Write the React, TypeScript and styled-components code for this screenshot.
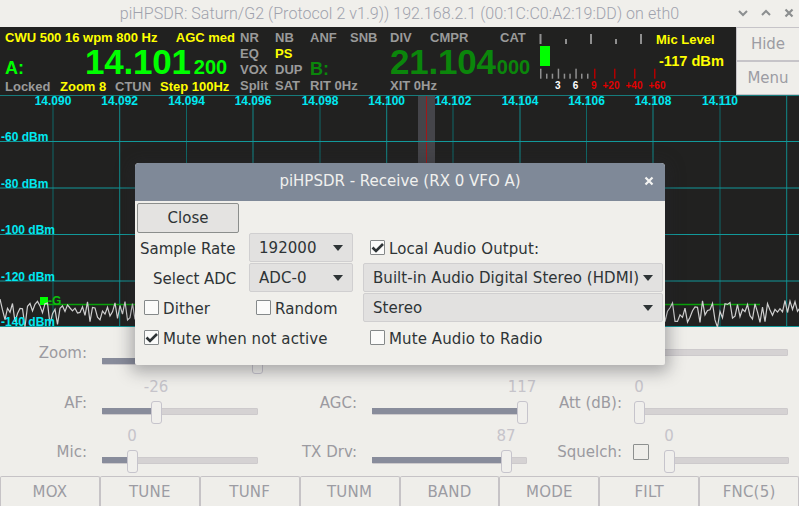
import React from "react";
import styled, { createGlobalStyle } from "styled-components";

const Global = createGlobalStyle`
  html, body { margin: 0; padding: 0; width: 799px; height: 506px; overflow: hidden; background: #efeeea; }
  #root { width: 799px; height: 506px; }
`;

const Page = styled.div`
  position: relative;
  width: 799px;
  height: 506px;
  overflow: hidden;
  display: flex;
  flex-direction: column;
  background: #efeeea;
  font-family: "DejaVu Sans", sans-serif;
`;

const TitleBar = styled.div`
  height: 27px;
  flex: none;
  display: flex;
  align-items: center;
  background: #f0efeb;
  position: relative;
`;
const TitleText = styled.div`
  width: 799px;
  text-align: center;
  font: 300 16px/25px Roboto, sans-serif;
  letter-spacing: 0.05px;
  color: #9fa2ad;
  white-space: nowrap;
`;
const WindowControls = styled.div`
  position: absolute;
  right: 4px;
  top: 7px;
  display: flex;
  gap: 11px;
`;

const VfoRow = styled.div`
  height: 68px;
  flex: none;
  display: flex;
  background: #212120;
`;
const Readout = styled.div`
  width: 736px;
  display: flex;
  font-family: "Liberation Sans", Arial, sans-serif;
  font-weight: 700;
  font-size: 13px;
  line-height: 15px;
  color: #9a9a9a;
  white-space: nowrap;
`;
const MainVfo = styled.div`
  width: 230px;
  flex: none;
  padding: 3px 0 0 5px;
`;
const Spread = styled.div`
  display: flex;
  justify-content: space-between;
  height: 15px;
`;
const Yellow = styled.span`
  color: #ffff00;
`;
const FreqLine = styled.div`
  height: 33px;
  display: flex;
  align-items: baseline;
  color: #00ff00;
`;
const VfoLetter = styled.span`
  font-size: 18px;
  width: 80px;
  line-height: 33px;
`;
const FreqBig = styled.span`
  font-size: 35px;
  line-height: 33px;
  letter-spacing: -0.2px;
`;
const FreqSmall = styled.span`
  font-size: 20px;
  margin-left: 3px;
`;
const InfoRow = styled.div`
  display: flex;
  height: 15px;
  margin-top: 1px;
`;
const Info = styled.span<{ $w: number }>`
  width: ${(p) => p.$w}px;
  flex: none;
`;
const YellowInfo = styled(Info)`
  color: #ffff00;
`;
const Flags = styled.div`
  width: 296px;
  flex: none;
  margin-left: 5px;
  display: grid;
  grid-template-columns: 35px 35px 40px 40px 40px 70px 36px;
  grid-template-rows: repeat(4, 16px);
  padding-top: 3px;
`;
const Flag = styled.span<{ $col: number; $row: number; $span?: number; $on?: boolean }>`
  grid-column: ${(p) => p.$col} / span ${(p) => p.$span ?? 1};
  grid-row: ${(p) => p.$row};
  ${(p) => (p.$on ? "color: #ffff00;" : "")}
`;
const DimLetter = styled.span`
  grid-column: 3;
  grid-row: 3;
  font-size: 18px;
  color: #0b860b;
  line-height: 19px;
  margin-top: -2px;
`;
const DimFreq = styled.div`
  grid-column: 5 / span 3;
  grid-row: 2 / span 2;
  display: flex;
  align-items: baseline;
  color: #0b860b;
  margin-top: -1px;
`;
const DimSmall = styled.span`
  font-size: 20px;
  margin-left: 1px;
`;
const MeterWrap = styled.div`
  flex: none;
  width: 200px;
  height: 68px;
`;
const SideButtons = styled.div`
  flex: 1;
  display: flex;
  flex-direction: column;
`;
const SideButton = styled.div`
  flex: 1;
  display: flex;
  align-items: center;
  justify-content: center;
  background: #efeeea;
  border: 1px solid #c6c4c8;
  border-right: none;
  font-size: 15px;
  color: #9c9ca3;
`;

const Pan = styled.div`
  height: 232px;
  flex: none;
  background: #212120;
  line-height: 0;
`;

const Controls = styled.div`
  flex: 1;
  display: grid;
  grid-template-columns: 270px 265px 264px;
  grid-template-rows: repeat(3, 49.67px);
  color: #9b9aa0;
  font-size: 15px;
`;
const Cell = styled.div<{ $span?: number }>`
  display: flex;
  align-items: stretch;
  ${(p) => (p.$span ? `grid-column: span ${p.$span};` : "")}
`;
const CtlLabel = styled.div`
  width: 87px;
  flex: none;
  text-align: right;
  line-height: 52px;
  white-space: nowrap;
`;
const SliderBox = styled.div<{ $left: number; $width: number }>`
  position: relative;
  flex: none;
  margin-left: ${(p) => p.$left}px;
  width: ${(p) => p.$width}px;
  height: 100%;
`;
const Track = styled.div<{ $top: number }>`
  position: absolute;
  left: 0;
  right: 0;
  top: ${(p) => p.$top}px;
  height: 5px;
  background: #d5d2d3;
  border: 1px solid #cdcacc;
  border-radius: 1px;
`;
const Fill = styled.div<{ $top: number; $w: number }>`
  position: absolute;
  left: 0;
  top: ${(p) => p.$top}px;
  width: ${(p) => p.$w}px;
  height: 6px;
  background: #888c9b;
`;
const Handle = styled.div<{ $x: number; $top: number }>`
  position: absolute;
  left: ${(p) => p.$x}px;
  top: ${(p) => p.$top}px;
  width: 9px;
  height: 21px;
  background: #f0efec;
  border: 1px solid #c6c4cc;
  border-radius: 3px;
`;
const Value = styled.div<{ $x: number }>`
  position: absolute;
  left: ${(p) => p.$x + 5}px;
  top: 0;
  transform: translateX(-50%);
  line-height: 20px;
  color: #c6c4ca;
  white-space: nowrap;
`;
const SquelchBox = styled.div`
  flex: none;
  width: 14px;
  height: 14px;
  margin: 18px 0 0 11px;
  border: 1px solid #8d908f;
  border-radius: 1px;
  background: #efeeea;
`;

const Toolbar = styled.div`
  height: 30px;
  flex: none;
  display: grid;
  grid-template-columns: repeat(8, 1fr);
`;
const ToolButton = styled.div`
  display: flex;
  align-items: center;
  justify-content: center;
  box-sizing: border-box;
  border: 1px solid #c6c3c6;
  border-bottom: none;
  border-radius: 2px 2px 0 0;
  background: #efeeea;
  padding-top: 1px;
  font-size: 15px;
  letter-spacing: 0.2px;
  color: #9c9ca3;
`;

const Dialog = styled.div`
  position: absolute;
  left: 135px;
  top: 163px;
  width: 530px;
  height: 202px;
  border-radius: 4px 4px 2px 2px;
  background: #f0efeb;
  box-shadow: 0 3px 16px 4px rgba(40, 40, 50, 0.35);
  overflow: hidden;
  color: #2e3436;
  font-size: 15px;
`;
const DialogHead = styled.div`
  position: relative;
  height: 38px;
  background: #7f8998;
  color: #f0f0ee;
  text-align: center;
  font-size: 15px;
  line-height: 37px;
`;
const CloseX = styled.div`
  position: absolute;
  right: 11px;
  top: 13px;
  line-height: 0;
`;
const DialogBody = styled.div`
  display: grid;
  grid-template-columns: 112px 104px 10px 300px;
  grid-template-rows: repeat(5, 30px);
  padding: 2px 0 0 2px;
`;
const CloseButton = styled.div`
  grid-column: 1 / span 4;
  width: 100px;
  height: 28px;
  display: flex;
  align-items: center;
  justify-content: center;
  border: 1px solid #8b8e8c;
  border-radius: 2px;
  background: #e4e3e1;
`;
const FieldLabel = styled.div<{ $indent: number }>`
  padding-left: ${(p) => p.$indent}px;
  line-height: 32px;
  white-space: nowrap;
`;
const Select = styled.div<{ $col: number }>`
  grid-column: ${(p) => p.$col};
  height: 29px;
  box-sizing: border-box;
  display: flex;
  align-items: center;
  justify-content: space-between;
  padding: 1px 9px 0;
  background: #e2e1e0;
  border: 1px solid #d0cfd0;
  border-radius: 2px;
  white-space: nowrap;
  letter-spacing: 0.05px;
`;
const Arrow = styled.span`
  width: 0;
  height: 0;
  border-left: 5.5px solid transparent;
  border-right: 5.5px solid transparent;
  border-top: 6px solid #2e3436;
`;
const CheckRow = styled.div<{ $col: number; $span?: number; $pad: number }>`
  grid-column: ${(p) => p.$col} / span ${(p) => p.$span ?? 1};
  display: flex;
  align-items: center;
  gap: 4px;
  padding-left: ${(p) => p.$pad}px;
  height: 29px;
  white-space: nowrap;
  letter-spacing: 0.1px;
`;
const CheckText = styled.span`
  margin-top: 2px;
`;
const Box = styled.span`
  width: 13px;
  height: 13px;
  flex: none;
  border: 1px solid #85898a;
  border-radius: 1px;
  background: #fbfbfa;
  line-height: 0;
`;

const Check = ({ on }: { on?: boolean }) => (
  <Box>
    {on && (
      <svg width="13" height="13" viewBox="0 0 13 13">
        <path d="M1.5 6.5 L5 10 L12 3" fill="none" stroke="#2e3436" strokeWidth="2.6" />
      </svg>
    )}
  </Box>
);

const FONT = "'Liberation Sans', sans-serif";

const Meter = () => {
  const top: [number, number][] = [
    [3.5, 10],
    [29, 5],
    [54, 10],
    [79, 5],
    [104, 10],
  ];
  const small = [4, 10, 15.7, 21.7, 27.7, 33.3, 39.3, 45, 51];
  const red = [58, 78, 98, 118];
  const txt: [string, number, string][] = [
    ["3", 21.7, "#ffffff"],
    ["6", 39.6, "#ffffff"],
    ["9", 57.7, "#e00000"],
    ["+20", 75, "#e00000"],
    ["+40", 98, "#e00000"],
    ["+60", 121, "#e00000"],
  ];
  return (
    <svg width="200" height="68" viewBox="0 0 200 68">
      {top.map(([x, h]) => (
        <rect key={x} x={x} y={17 - h} width="2" height={h} fill="#8f8f8f" />
      ))}
      <rect x="4" y="19" width="10" height="20" fill="#00ff00" />
      {small.map((x, i) => (
        <rect key={x} x={x} y={i % 3 ? 46.7 : 41.7} width="1.5" height={i % 3 ? 5 : 10} fill="#8f8f8f" />
      ))}
      {red.map((x) => (
        <rect key={x} x={x} y="41.7" width="1.5" height="10" fill="#b00000" />
      ))}
      {txt.map(([t, x, c]) => (
        <text key={t} x={x} y="62" fontFamily={FONT} fontWeight="700" fontSize="10" textAnchor="middle" fill={c}>
          {t}
        </text>
      ))}
      <text x="120" y="17" fontFamily={FONT} fontWeight="700" fontSize="13" fill="#ffff00">
        Mic Level
      </text>
      <text x="123" y="39" fontFamily={FONT} fontWeight="700" fontSize="14.6" fill="#ffff00">
        -117 dBm
      </text>
    </svg>
  );
};

const noise = (() => {
  let s = 12345;
  const r = () => {
    s = (s * 1664525 + 1013904223) >>> 0;
    return s / 4294967296;
  };
  const pts: string[] = [];
  for (let x = 0; x <= 800; x += 2.5) {
    const v = r();
    const y = 204 + v * v * 24 + r() * 6;
    pts.push(`${x},${y.toFixed(1)}`);
  }
  return pts.join(" ");
})();

const Panadapter = () => {
  const vs = [53, 119.7, 186.5, 253, 320, 386.7, 453, 520, 586.5, 653, 720, 786.7];
  const freq = ["14.090", "14.092", "14.094", "14.096", "14.098", "14.100", "14.102", "14.104", "14.106", "14.108", "14.110"];
  const hs: [number, string][] = [
    [46.5, "-60 dBm"],
    [93, "-80 dBm"],
    [139.5, "-100 dBm"],
    [186, "-120 dBm"],
    [231.5, "-140 dBm"],
  ];
  return (
    <svg width="799" height="232" viewBox="0 0 799 232">
      <rect x="418" y="0" width="17" height="232" fill="#45454a" />
      <rect x="426" y="0" width="1" height="232" fill="#a01818" />
      <line x1="0" x2="799" y1="0.5" y2="0.5" stroke="#167c7c" />
      {vs.map((x, i) => (
        <line key={x} x1={x} x2={x} y1="0" y2="232" stroke={i % 2 ? "#118a8a" : "#0e6868"} strokeWidth="1" />
      ))}
      {hs.map(([y]) => (
        <line key={y} x1="0" x2="799" y1={y} y2={y} stroke="#12999a" strokeWidth="1" />
      ))}
      {freq.map((f, i) => (
        <text key={f} x={vs[i]} y="10" textAnchor="middle" fontFamily={FONT} fontWeight="700" fontSize="12" fill="#00e8f0">
          {f}
        </text>
      ))}
      <line x1="48" x2="760" y1="209.5" y2="209.5" stroke="#0aa00a" strokeWidth="1.5" />
      <rect x="40" y="202" width="8" height="8" fill="#00ff00" />
      <text x="48" y="210" fontFamily={FONT} fontSize="12" fontWeight="700" fill="#0cc00c">
        -G
      </text>
      <polyline points={noise} fill="none" stroke="#cfcfcf" strokeWidth="1.2" />
      {hs.map(([y, t]) => (
        <text key={t} x="1" y={y - 0.5} fontFamily={FONT} fontWeight="700" fontSize="12" fill="#00e8f0">
          {t}
        </text>
      ))}
    </svg>
  );
};

const Slider = ({ left, width, x, value, fill = true, top = 24 }: { left: number; width: number; x: number; value?: string; fill?: boolean; top?: number }) => (
  <SliderBox $left={left} $width={width}>
    <Track $top={top + 7} />
    {fill && <Fill $top={top + 7} $w={x} />}
    {fill && <Handle $x={x} $top={top} />}
    {value !== undefined && <Value $x={x}>{value}</Value>}
  </SliderBox>
);

const tools = ["MOX", "TUNE", "TUNF", "TUNM", "BAND", "MODE", "FILT", "FNC(5)"];

export default function App() {
  return (
    <Page>
      <Global />
      <TitleBar>
        <TitleText>piHPSDR: Saturn/G2 (Protocol 2 v1.9)) 192.168.2.1 (00:1C:C0:A2:19:DD) on eth0</TitleText>
        <WindowControls>
          <svg width="12" height="12" viewBox="0 0 12 12"><path d="M2 4 L6 8 L10 4" fill="none" stroke="#8c8f90" strokeWidth="2" /></svg>
          <svg width="12" height="12" viewBox="0 0 12 12"><path d="M2 8 L6 4 L10 8" fill="none" stroke="#8c8f90" strokeWidth="2" /></svg>
          <svg width="12" height="12" viewBox="0 0 12 12"><path d="M2.5 2.5 L9.5 9.5 M9.5 2.5 L2.5 9.5" fill="none" stroke="#8c8f90" strokeWidth="2.2" /></svg>
        </WindowControls>
      </TitleBar>
      <VfoRow>
        <Readout>
          <MainVfo>
            <Spread>
              <Yellow>CWU 500 16 wpm 800 Hz</Yellow>
              <Yellow>AGC med</Yellow>
            </Spread>
            <FreqLine>
              <VfoLetter>A:</VfoLetter>
              <FreqBig>14.101</FreqBig>
              <FreqSmall>200</FreqSmall>
            </FreqLine>
            <InfoRow>
              <Info $w={55}>Locked</Info>
              <YellowInfo $w={55}>Zoom 8</YellowInfo>
              <Info $w={45}>CTUN</Info>
              <YellowInfo $w={75}>Step 100Hz</YellowInfo>
            </InfoRow>
          </MainVfo>
          <Flags>
            <Flag $col={1} $row={1}>NR</Flag>
            <Flag $col={2} $row={1}>NB</Flag>
            <Flag $col={3} $row={1}>ANF</Flag>
            <Flag $col={4} $row={1}>SNB</Flag>
            <Flag $col={5} $row={1}>DIV</Flag>
            <Flag $col={6} $row={1}>CMPR</Flag>
            <Flag $col={7} $row={1}>CAT</Flag>
            <Flag $col={1} $row={2}>EQ</Flag>
            <Flag $col={2} $row={2} $on>PS</Flag>
            <DimFreq>
              <FreqBig>21.104</FreqBig>
              <DimSmall>000</DimSmall>
            </DimFreq>
            <Flag $col={1} $row={3}>VOX</Flag>
            <Flag $col={2} $row={3}>DUP</Flag>
            <DimLetter>B:</DimLetter>
            <Flag $col={1} $row={4}>Split</Flag>
            <Flag $col={2} $row={4}>SAT</Flag>
            <Flag $col={3} $row={4} $span={2}>RIT 0Hz</Flag>
            <Flag $col={5} $row={4} $span={2}>XIT 0Hz</Flag>
          </Flags>
          <MeterWrap>
            <Meter />
          </MeterWrap>
        </Readout>
        <SideButtons>
          <SideButton>Hide</SideButton>
          <SideButton>Menu</SideButton>
        </SideButtons>
      </VfoRow>
      <Pan>
        <Panadapter />
      </Pan>
      <Controls>
        <Cell $span={2}>
          <CtlLabel>Zoom:</CtlLabel>
          <Slider left={15} width={425} x={150} />
        </Cell>
        <Cell>
          <CtlLabel />
          <Slider left={12} width={154} x={0} fill={false} top={15} />
        </Cell>
        <Cell>
          <CtlLabel>AF:</CtlLabel>
          <Slider left={15} width={156} x={49} value="-26" />
        </Cell>
        <Cell>
          <CtlLabel>AGC:</CtlLabel>
          <Slider left={15} width={155} x={145} value="117" />
        </Cell>
        <Cell>
          <CtlLabel>Att (dB):</CtlLabel>
          <Slider left={12} width={154} x={0} value="0" />
        </Cell>
        <Cell>
          <CtlLabel>Mic:</CtlLabel>
          <Slider left={15} width={156} x={25} value="0" />
        </Cell>
        <Cell>
          <CtlLabel>TX Drv:</CtlLabel>
          <Slider left={15} width={155} x={129} value="87" />
        </Cell>
        <Cell>
          <CtlLabel>Squelch:</CtlLabel>
          <SquelchBox />
          <Slider left={15} width={125} x={0} value="0" />
        </Cell>
      </Controls>
      <Toolbar>
        {tools.map((t) => (
          <ToolButton key={t}>{t}</ToolButton>
        ))}
      </Toolbar>
      <Dialog>
        <DialogHead>
          piHPSDR - Receive (RX 0 VFO A)
          <CloseX>
            <svg width="10" height="10" viewBox="0 0 10 10"><path d="M1.5 1.5 L8.5 8.5 M8.5 1.5 L1.5 8.5" stroke="#f4f4f2" strokeWidth="2.2" /></svg>
          </CloseX>
        </DialogHead>
        <DialogBody>
          <CloseButton>Close</CloseButton>
          <FieldLabel $indent={3}>Sample Rate</FieldLabel>
          <Select $col={2}>192000<Arrow /></Select>
          <CheckRow $col={4} $pad={7}><Check on /><CheckText>Local Audio Output:</CheckText></CheckRow>
          <FieldLabel $indent={16}>Select ADC</FieldLabel>
          <Select $col={2}>ADC-0<Arrow /></Select>
          <Select $col={4}>Built-in Audio Digital Stereo (HDMI)<Arrow /></Select>
          <CheckRow $col={1} $pad={7}><Check /><CheckText>Dither</CheckText></CheckRow>
          <CheckRow $col={2} $pad={7}><Check /><CheckText>Random</CheckText></CheckRow>
          <Select $col={4}>Stereo<Arrow /></Select>
          <CheckRow $col={1} $span={2} $pad={7}><Check on /><CheckText>Mute when not active</CheckText></CheckRow>
          <CheckRow $col={4} $pad={7}><Check /><CheckText>Mute Audio to Radio</CheckText></CheckRow>
        </DialogBody>
      </Dialog>
    </Page>
  );
}
